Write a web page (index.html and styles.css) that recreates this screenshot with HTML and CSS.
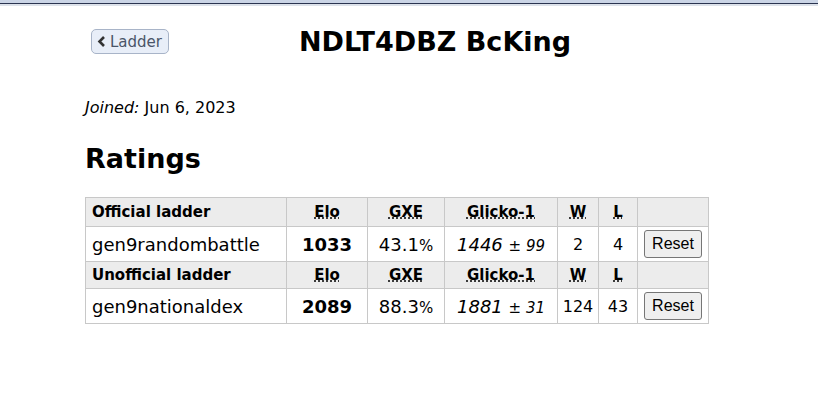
FILE: index.html
```html
<!DOCTYPE html>
<html lang="en">
<head>
    <meta charset="UTF-8">
    <title>NDLT4DBZ BcKing</title>
    <link rel="stylesheet" href="styles.css">
</head>
<body>
    <div class="topbar"></div>

    <div class="page">
        <div class="page-head">
            <button class="back-btn">
                <svg class="chev" width="9" height="11" viewBox="0 0 9 11"><path d="M7 1 L2.5 5.5 L7 10" fill="none" stroke="#333" stroke-width="2.6"/></svg>
                Ladder
            </button>
            <h1>NDLT4DBZ BcKing</h1>
        </div>

        <p class="joined"><em>Joined:</em> Jun 6, 2023</p>

        <h2>Ratings</h2>

        <table class="ratings">
            <colgroup>
                <col class="c-name">
                <col class="c-elo">
                <col class="c-gxe">
                <col class="c-glicko">
                <col class="c-w">
                <col class="c-l">
                <col class="c-btn">
            </colgroup>
            <tr class="head first">
                <th class="ladder">Official ladder</th>
                <th><abbr title="Elo rating">Elo</abbr></th>
                <th><abbr title="user's percentage chance of winning a random battle">GXE</abbr></th>
                <th><abbr title="Glicko-1 rating">Glicko-1</abbr></th>
                <th><abbr title="Wins">W</abbr></th>
                <th><abbr title="Losses">L</abbr></th>
                <th></th>
            </tr>
            <tr>
                <td class="format">gen9randombattle</td>
                <td><strong>1033</strong></td>
                <td>43.1<small>%</small></td>
                <td><em>1446</em> <small>&plusmn; <em>99</em></small></td>
                <td class="num">2</td>
                <td class="num">4</td>
                <td><button class="reset">Reset</button></td>
            </tr>
            <tr class="head">
                <th class="ladder">Unofficial ladder</th>
                <th><abbr title="Elo rating">Elo</abbr></th>
                <th><abbr title="user's percentage chance of winning a random battle">GXE</abbr></th>
                <th><abbr title="Glicko-1 rating">Glicko-1</abbr></th>
                <th><abbr title="Wins">W</abbr></th>
                <th><abbr title="Losses">L</abbr></th>
                <th></th>
            </tr>
            <tr>
                <td class="format">gen9nationaldex</td>
                <td><strong>2089</strong></td>
                <td>88.3<small>%</small></td>
                <td><em>1881</em> <small>&plusmn; <em>31</em></small></td>
                <td class="num">124</td>
                <td class="num">43</td>
                <td><button class="reset">Reset</button></td>
            </tr>
        </table>
    </div>
</body>
</html>
```

FILE: styles.css
```css
body {
    margin: 0;
    font-family: "DejaVu Sans", Verdana, sans-serif;
    color: #000;
    background: #fff;
}
.topbar {
    height: 3px;
    background-color: #cbd5e6;
    border-bottom: 1px solid #2b3550;
    box-shadow: 0 2px 0 #dde2ea;
}
.page {
    width: 700px;
    margin-left: 85px;
}
.page-head {
    position: relative;
    padding-top: 22px;
    height: 40px;
}
.page-head h1 {
    margin: 0;
    text-align: center;
    font-size: 27px;
    line-height: 32px;
}
.back-btn {
    position: absolute;
    left: 6px;
    top: 25px;
    height: 25px;
    padding: 0 6px 0 5px;
    display: flex;
    align-items: center;
    gap: 4px;
    font-family: "DejaVu Sans", Verdana, sans-serif;
    font-size: 15px;
    color: #4a5568;
    background: #e8eef8;
    border: 1px solid #a8b4c8;
    border-radius: 5px;
}
.joined {
    margin: 32px 0 0;
    font-size: 16px;
    line-height: 20px;
}
h2 {
    margin: 24px 0 21px;
    font-size: 27px;
    line-height: 34px;
}
.ratings {
    border-collapse: collapse;
    width: 623px;
    table-layout: fixed;
}
.c-name { width: 201px; }
.c-elo { width: 81px; }
.c-gxe { width: 77px; }
.c-glicko { width: 113px; }
.c-w { width: 41px; }
.c-l { width: 39px; }
.c-btn { width: 71px; }
.ratings th,
.ratings td {
    border: 1px solid #c8c8c8;
    text-align: center;
    padding: 0 6px;
    white-space: nowrap;
}
.ratings th {
    background-color: #ececec;
    font-size: 15px;
    height: 26px;
}
.ratings tr.first th {
    height: 28px;
}
.ratings td {
    font-size: 18px;
    height: 34px;
}
.ratings th.ladder,
.ratings td.format {
    text-align: left;
}
.ratings td.num {
    font-size: 16px;
    padding: 0;
}
.ratings small {
    font-size: 15px;
}
abbr {
    text-decoration: underline dotted;
}
.reset {
    font-family: "Liberation Sans", Arial, sans-serif;
    font-size: 16px;
    height: 28px;
    padding: 0 7px;
    background: #efefef;
    border: 1px solid #767676;
    border-radius: 3px;
}
```
